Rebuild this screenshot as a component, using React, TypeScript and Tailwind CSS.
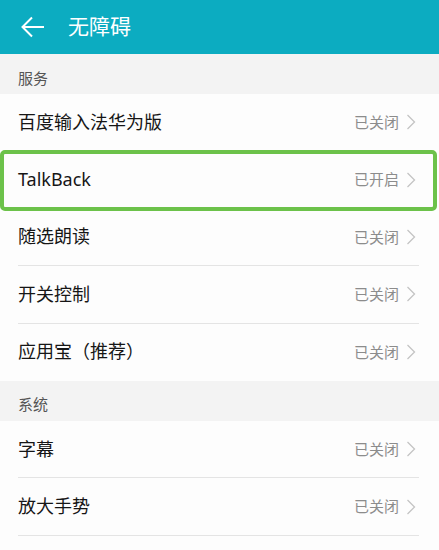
import React from "react";

type Item = { label: string; status: string; highlight?: boolean };

const services: Item[] = [
  { label: "百度输入法华为版", status: "已关闭" },
  { label: "TalkBack", status: "已开启", highlight: true },
  { label: "随选朗读", status: "已关闭" },
  { label: "开关控制", status: "已关闭" },
  { label: "应用宝（推荐）", status: "已关闭" },
];

const system: Item[] = [
  { label: "字幕", status: "已关闭" },
  { label: "放大手势", status: "已关闭" },
];

const font = {
  fontFamily: '"Noto Sans", "Noto Sans CJK SC", sans-serif',
};

function Chevron() {
  return (
    <svg width="10" height="16" viewBox="0 0 10 16" className="ml-[7px]">
      <path d="M1.5 1 L8.5 8 L1.5 15" fill="none" stroke="#c4c4c4" strokeWidth="1.3" />
    </svg>
  );
}

function Row({ item, last }: { item: Item; last?: boolean }) {
  return (
    <div className="relative h-[57.4px]">
      {item.highlight && (
        <div className="absolute left-0 right-[2px] top-[-1px] bottom-[-2px] border-4 border-[#6cc24a] rounded-[5px] pointer-events-none z-10" />
      )}
      <div
        className="flex items-center h-full ml-[18px] mr-[20px] border-b border-[#e4e4e4]"
        style={last ? { borderBottomColor: "transparent" } : undefined}
      >
        <span className="flex-1 text-[18px] text-[#161616]">{item.label}</span>
        <span className="text-[15px] text-[#8c8c8c]">{item.status}</span>
        <Chevron />
        <span className="w-[3px]" />
      </div>
    </div>
  );
}

function Section({ title }: { title: string }) {
  return (
    <div className="h-[40px] bg-[#f3f3f3] flex items-end pb-[5px] px-[18px]">
      <span className="text-[15px] text-[#555555]">{title}</span>
    </div>
  );
}

export default function App() {
  return (
    <div className="w-[439px] h-[550px] bg-[#fdfdfd] overflow-hidden" style={font}>
      <header className="h-[54px] bg-[#0cacc1] flex items-center">
        <svg width="24" height="22" viewBox="0 0 24 22" className="ml-[21px]">
          <path d="M11 1.5 L1.5 11 L11 20.5 M1.5 11 H23" fill="none" stroke="#ffffff" strokeWidth="2" />
        </svg>
        <h1 className="ml-[23px] text-[21px] text-white">无障碍</h1>
      </header>
      <Section title="服务" />
      {services.map((s, i) => (
        <Row key={s.label} item={s} last={i === services.length - 1} />
      ))}
      <Section title="系统" />
      {system.map((s) => (
        <Row key={s.label} item={s} />
      ))}
    </div>
  );
}
